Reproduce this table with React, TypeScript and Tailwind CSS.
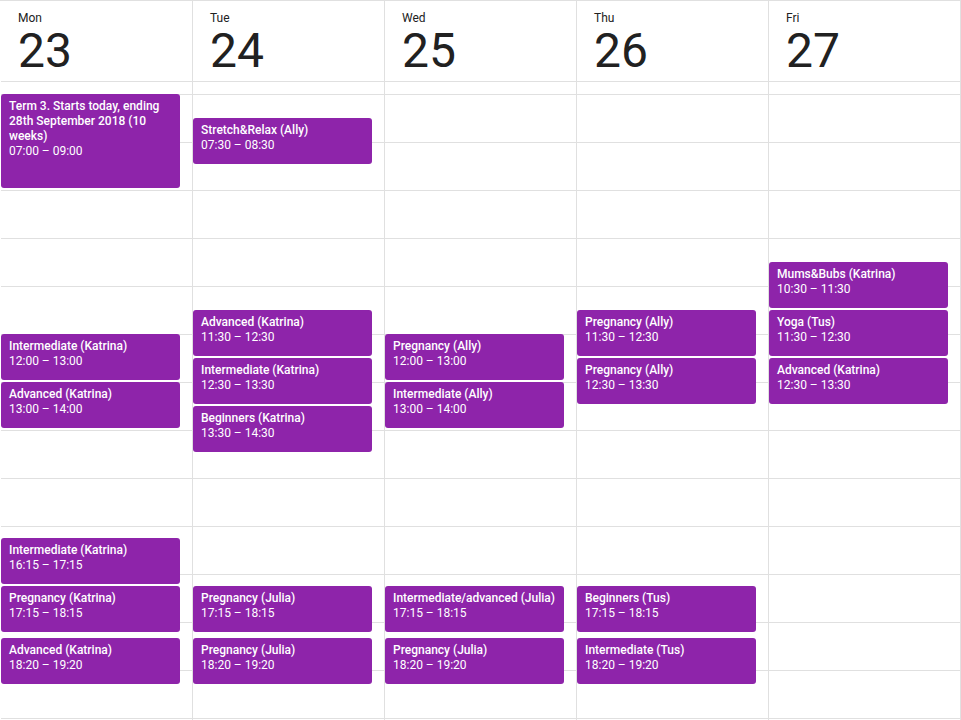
import React from 'react';

type CalEvent = {
  title: string;
  start: string;
  end: string;
};

type Day = {
  name: string;
  date: number;
  events: CalEvent[];
};

const HOUR_HEIGHT = 48;
const FIRST_HOUR = 7;
const TOP_OFFSET = 12;

const DAYS: Day[] = [
  {
    name: 'Mon',
    date: 23,
    events: [
      { title: 'Term 3. Starts today, ending 28th September 2018 (10 weeks)', start: '07:00', end: '09:00' },
      { title: 'Intermediate (Katrina)', start: '12:00', end: '13:00' },
      { title: 'Advanced (Katrina)', start: '13:00', end: '14:00' },
      { title: 'Intermediate (Katrina)', start: '16:15', end: '17:15' },
      { title: 'Pregnancy (Katrina)', start: '17:15', end: '18:15' },
      { title: 'Advanced (Katrina)', start: '18:20', end: '19:20' },
    ],
  },
  {
    name: 'Tue',
    date: 24,
    events: [
      { title: 'Stretch&Relax (Ally)', start: '07:30', end: '08:30' },
      { title: 'Advanced (Katrina)', start: '11:30', end: '12:30' },
      { title: 'Intermediate (Katrina)', start: '12:30', end: '13:30' },
      { title: 'Beginners (Katrina)', start: '13:30', end: '14:30' },
      { title: 'Pregnancy (Julia)', start: '17:15', end: '18:15' },
      { title: 'Pregnancy (Julia)', start: '18:20', end: '19:20' },
    ],
  },
  {
    name: 'Wed',
    date: 25,
    events: [
      { title: 'Pregnancy (Ally)', start: '12:00', end: '13:00' },
      { title: 'Intermediate (Ally)', start: '13:00', end: '14:00' },
      { title: 'Intermediate/advanced (Julia)', start: '17:15', end: '18:15' },
      { title: 'Pregnancy (Julia)', start: '18:20', end: '19:20' },
    ],
  },
  {
    name: 'Thu',
    date: 26,
    events: [
      { title: 'Pregnancy (Ally)', start: '11:30', end: '12:30' },
      { title: 'Pregnancy (Ally)', start: '12:30', end: '13:30' },
      { title: 'Beginners (Tus)', start: '17:15', end: '18:15' },
      { title: 'Intermediate (Tus)', start: '18:20', end: '19:20' },
    ],
  },
  {
    name: 'Fri',
    date: 27,
    events: [
      { title: 'Mums&Bubs (Katrina)', start: '10:30', end: '11:30' },
      { title: 'Yoga (Tus)', start: '11:30', end: '12:30' },
      { title: 'Advanced (Katrina)', start: '12:30', end: '13:30' },
    ],
  },
];

const toHours = (t: string) => {
  const [h, m] = t.split(':').map(Number);
  return h + m / 60;
};

function EventBlock({ event }: { event: CalEvent }) {
  const top = TOP_OFFSET + (toHours(event.start) - FIRST_HOUR) * HOUR_HEIGHT;
  const height = (toHours(event.end) - toHours(event.start)) * HOUR_HEIGHT - 2;

  return (
    <div
      className="absolute left-0 w-[179px] overflow-hidden rounded-[3px] bg-[#8e24aa] px-2 pt-[5px] text-[12px] leading-[15px] text-white"
      style={{ top, height }}
    >
      <div className="font-medium">{event.title}</div>
      <div>
        {event.start} – {event.end}
      </div>
    </div>
  );
}

function DayColumn({ day, first }: { day: Day; first: boolean }) {
  return (
    <div className={`w-[192px] shrink-0 border-l ${first ? 'border-l-white' : 'border-l-[#e0e0e0]'}`}>
      {/* cabeçalho do dia */}
      <div className="h-[81px] border-b border-[#e0e0e0] pl-[17px] pt-[9px] text-[#212121]">
        <div className="text-[12px] leading-4">{day.name}</div>
        <div className="mt-[5px] text-[48px] leading-[40px]">{day.date}</div>
      </div>

      {/* grade de horas */}
      <div className="relative">
        <div className="h-[12px]" />
        {Array.from({ length: 14 }).map((_, i) => (
          <div key={i} className="h-12 border-t border-[#e0e0e0]" />
        ))}
        {day.events.map((event, i) => (
          <EventBlock key={i} event={event} />
        ))}
      </div>
    </div>
  );
}

export default function App() {
  return (
    <div className="h-[720px] w-[961px] overflow-hidden bg-white font-['Roboto','Liberation_Sans',sans-serif]">
      <div className="flex w-[961px] border-t border-r border-[#e0e0e0]">
        {DAYS.map((day, i) => (
          <DayColumn key={day.name} day={day} first={i === 0} />
        ))}
      </div>
    </div>
  );
}
